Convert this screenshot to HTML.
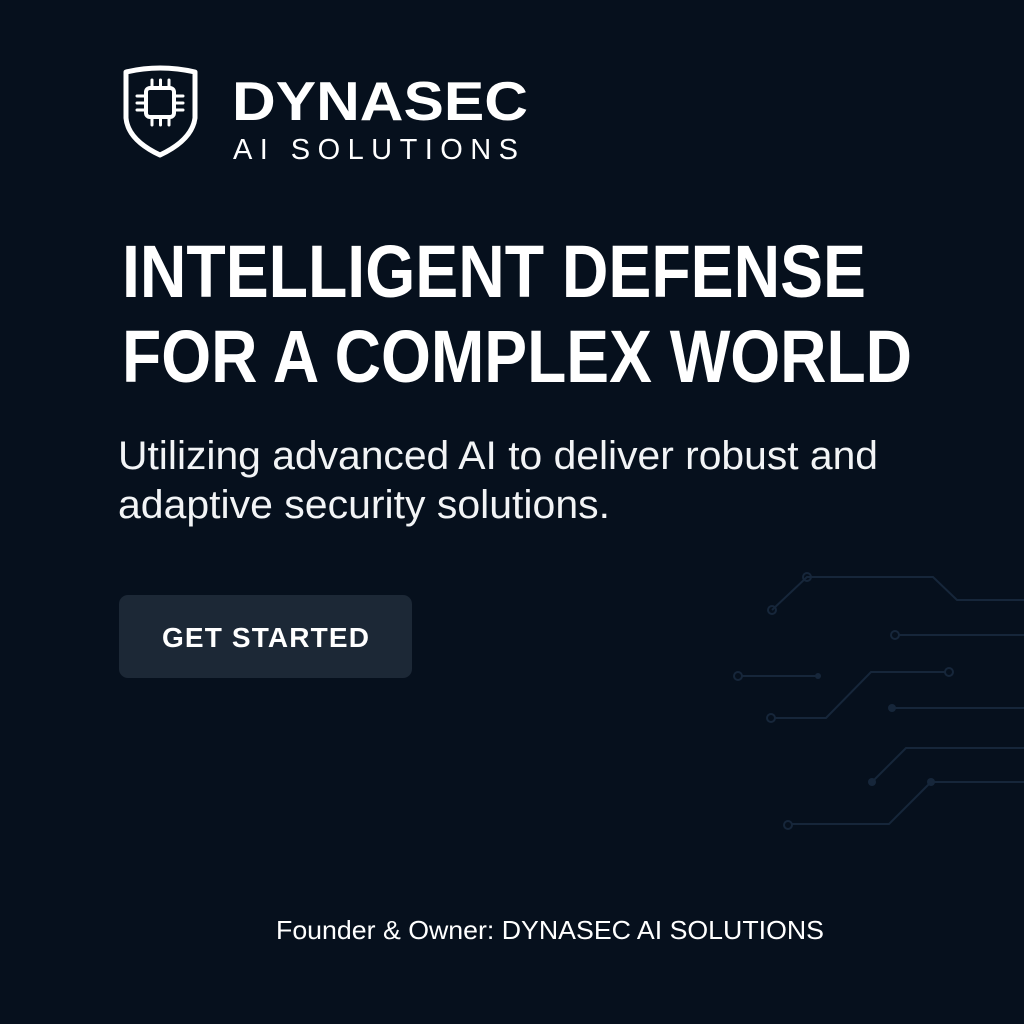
<!DOCTYPE html>
<html><head><meta charset="utf-8"><style>
html,body{margin:0;padding:0;background:#07111f;}
svg{display:block}
</style></head><body>
<svg width="1024" height="1024" viewBox="0 0 1024 1024" xmlns="http://www.w3.org/2000/svg">
<rect width="1024" height="1024" fill="#06101d"/>
<g stroke="#16263a" stroke-width="2" fill="none">
<path d="M772 610 L807 577 L933 577 L957 600 L1024 600"/>
<path d="M899 635 L1024 635"/>
<path d="M742 676 L818 676"/>
<path d="M775 718 L826 718 L871 672 L945 672"/>
<path d="M892 708 L1024 708"/>
<path d="M872 782 L906 748 L1024 748"/>
<path d="M931 782 L1024 782"/>
<path d="M931 782 L889 824 L792 824"/>
<circle cx="772" cy="610" r="4"/><circle cx="807" cy="577" r="4"/>
<circle cx="895" cy="635" r="4"/><circle cx="738" cy="676" r="4"/>
<circle cx="771" cy="718" r="4"/><circle cx="949" cy="672" r="4"/>
<circle cx="788" cy="825" r="4"/>
</g>
<g fill="#16263a"><circle cx="818" cy="676" r="3"/><circle cx="892" cy="708" r="4"/><circle cx="872" cy="782" r="4"/><circle cx="931" cy="782" r="4"/></g>
<g stroke="#fff" fill="none" stroke-width="5" stroke-linejoin="round">
<path d="M126 72 Q160 64 195 72 L195 118 Q192 140 160 155 Q128 140 126 118 Z"/>
<rect x="146" y="88" width="28" height="29" rx="4" stroke-width="4"/>
<g stroke-width="3" stroke-linecap="round">
<path d="M152 80v7M160.5 80v7M169 80v7M152 118v7M160.5 118v7M169 118v7M137 96h8M137 103h8M137 110h8M175 96h8M175 103h8M175 110h8"/>
</g>
</g>
<g font-family="Liberation Sans, sans-serif" fill="#fff">
<text x="232" y="120" font-size="55" font-weight="bold" textLength="296" lengthAdjust="spacingAndGlyphs">DYNASEC</text>
<text x="233" y="159" font-size="29" textLength="285" lengthAdjust="spacing">AI SOLUTIONS</text>
<text x="122" y="297" font-size="74" font-weight="bold" textLength="744" lengthAdjust="spacingAndGlyphs">INTELLIGENT DEFENSE</text>
<text x="122" y="382" font-size="74" font-weight="bold" textLength="790" lengthAdjust="spacingAndGlyphs">FOR A COMPLEX WORLD</text>
<text x="118" y="469" font-size="40" textLength="760" lengthAdjust="spacingAndGlyphs" fill="#f2f4f6">Utilizing advanced AI to deliver robust and</text>
<text x="118" y="518" font-size="40" textLength="492" lengthAdjust="spacingAndGlyphs" fill="#f2f4f6">adaptive security solutions.</text>
</g>
<rect x="119" y="595" width="293" height="83" rx="9" fill="#1c2836"/>
<text x="162" y="647" font-family="Liberation Sans, sans-serif" font-size="28" font-weight="bold" fill="#fff" textLength="207" lengthAdjust="spacing">GET STARTED</text>
<text x="276" y="939" font-family="Liberation Sans, sans-serif" font-size="26" fill="#fff" textLength="548" lengthAdjust="spacingAndGlyphs">Founder &amp; Owner: DYNASEC AI SOLUTIONS</text>
</svg>
</body></html>
